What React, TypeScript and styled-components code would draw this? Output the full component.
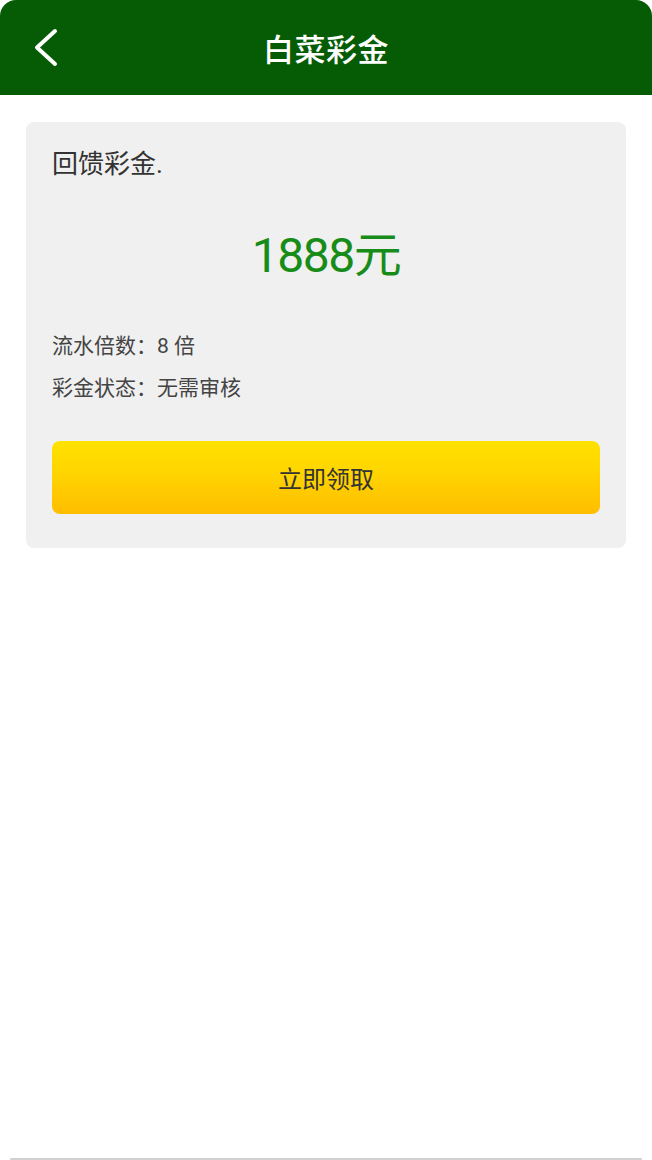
import styled, { createGlobalStyle } from "styled-components";

const GlobalStyle = createGlobalStyle`
  html, body {
    margin: 0;
    padding: 0;
    background: #fff;
  }

  body {
    font-family: Roboto, "Noto Sans CJK SC", sans-serif;
  }
`;

const Page = styled.div`
  display: flex;
  flex-direction: column;
  width: 652px;
  height: 1160px;
  background: #fff;
  overflow: hidden;
`;

const Header = styled.header`
  display: flex;
  align-items: center;
  justify-content: center;
  position: relative;
  height: 95px;
  flex-shrink: 0;

  background: #055c05;
  border-radius: 16px 16px 0 0;
`;

const BackButton = styled.button`
  position: absolute;
  left: 30px;
  top: 25px;
  display: flex;
  padding: 0;

  background: none;
  border: none;
`;

const HeaderTitle = styled.h1`
  margin: 0;
  color: #fff;
  font-size: 31px;
  font-weight: 500;
  letter-spacing: 0.5px;
`;

const Content = styled.main`
  flex: 1;
  padding: 27px 26px 0;
`;

const BonusCard = styled.section`
  display: flex;
  flex-direction: column;
  padding: 24px 26px 34px;

  background: #f0f0f0;
  border-radius: 8px;
`;

const CardTitle = styled.h2`
  margin: 0;
  color: #333;
  font-size: 26px;
  font-weight: 400;
  line-height: 36px;
`;

const Amount = styled.p`
  margin: 44px 0 0;
  color: #188c18;
  font-size: 48px;
  font-weight: 400;
  letter-spacing: -1.5px;
  line-height: 60px;
  text-align: center;
`;

const InfoList = styled.div`
  display: flex;
  flex-direction: column;
  gap: 10px;
  margin-top: 44px;
`;

const InfoLine = styled.div`
  color: #444;
  font-size: 21px;
  line-height: 32px;
`;

const ClaimButton = styled.button`
  margin-top: 37px;
  height: 73px;

  color: #333;
  font-family: inherit;
  font-size: 24px;

  background: linear-gradient(to bottom, #ffe200 0%, #ffd400 45%, #ffbd00 100%);
  border: none;
  border-radius: 8px;
`;

const BottomEdge = styled.div`
  height: 2px;
  margin: 0 10px;
  flex-shrink: 0;

  background: #d0d0d0;
  box-shadow: 0 -6px 12px rgba(0, 0, 0, 0.02);
  border-radius: 1px;
`;

function BackIcon() {
  return (
    <svg width="36" height="46" viewBox="0 0 36 46" fill="none">
      <path
        d="M25 6 L7 22.5 L25 39"
        stroke="#fff"
        strokeWidth="4"
        strokeLinecap="round"
        strokeLinejoin="round"
      />
    </svg>
  );
}

const infoLines = ["流水倍数：8 倍", "彩金状态：无需审核"];

function App() {
  return (
    <Page>
      <GlobalStyle />

      <Header>
        <BackButton aria-label="返回">
          <BackIcon />
        </BackButton>
        <HeaderTitle>白菜彩金</HeaderTitle>
      </Header>

      <Content>
        <BonusCard>
          <CardTitle>回馈彩金.</CardTitle>
          <Amount>1888元</Amount>

          <InfoList>
            {infoLines.map((line) => (
              <InfoLine key={line}>{line}</InfoLine>
            ))}
          </InfoList>

          <ClaimButton>立即领取</ClaimButton>
        </BonusCard>
      </Content>

      <BottomEdge />
    </Page>
  );
}

export default App;
